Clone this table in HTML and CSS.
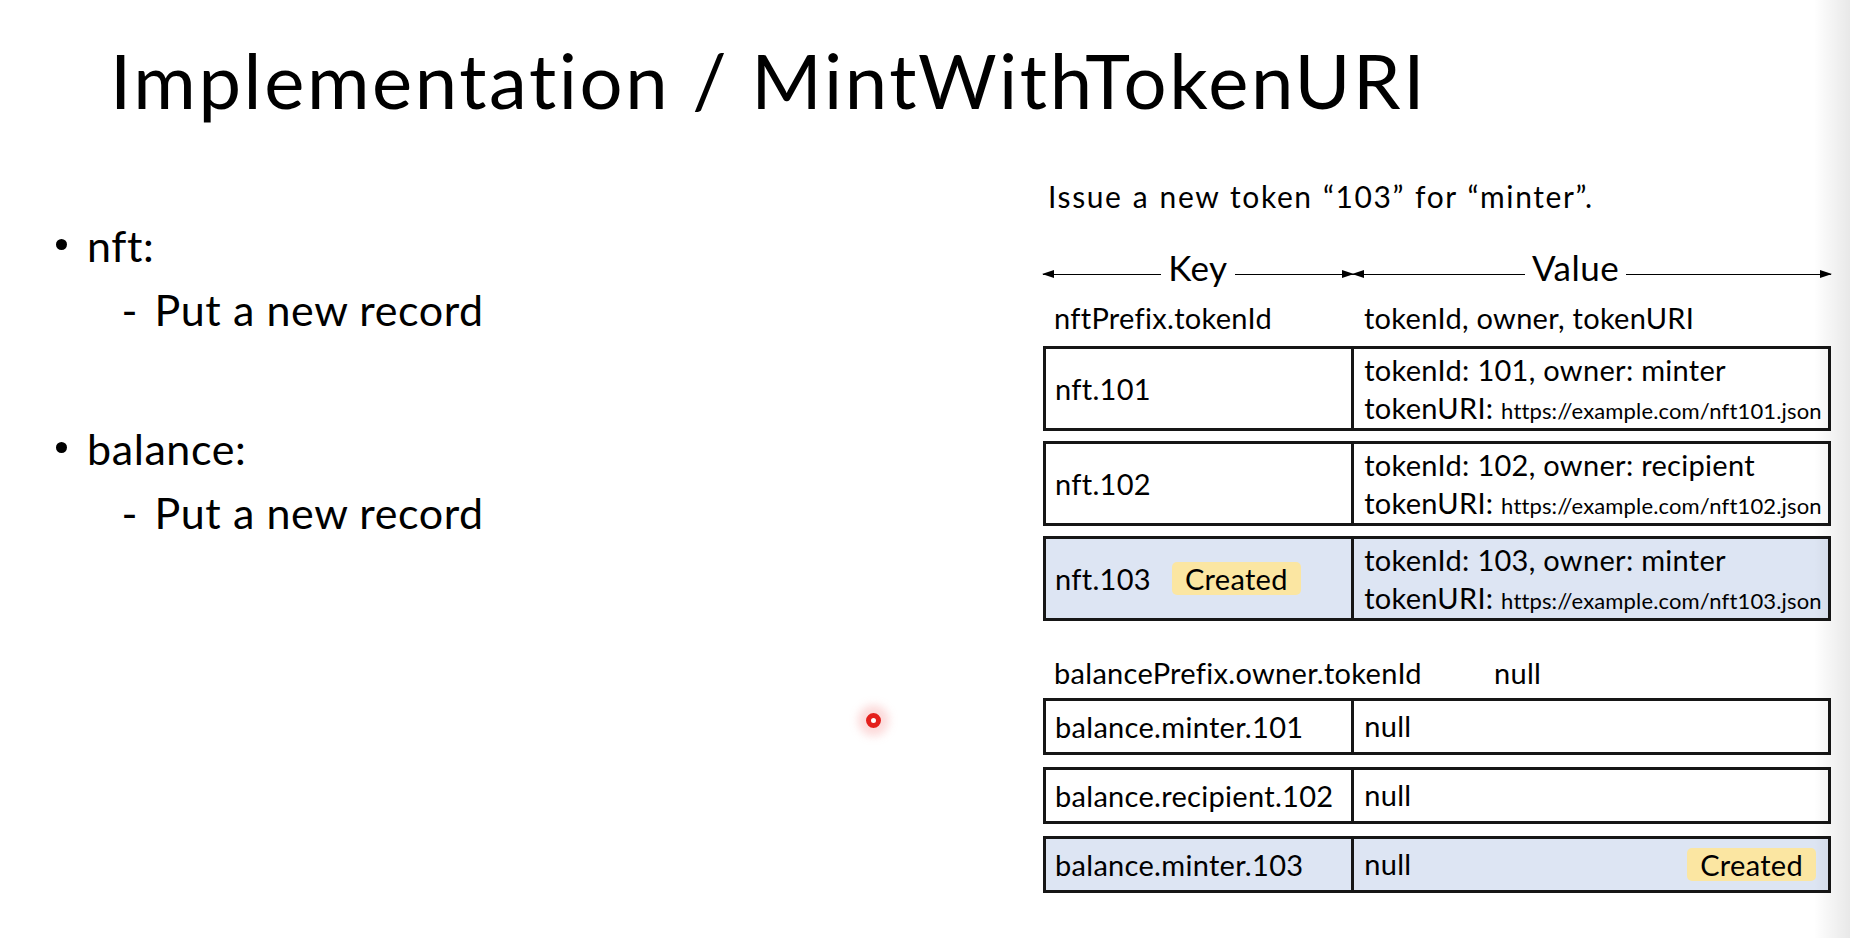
FILE: index.html
```html
<!DOCTYPE html>
<html lang="en">
<head>
<meta charset="utf-8">
<title>Implementation / MintWithTokenURI</title>
<link rel="stylesheet" href="styles.css">
</head>
<body>
<div class="slide">
  <h1 class="title">Implementation / MintWithTokenURI</h1>
  <div class="content">
    <ul class="points">
      <li class="point">
        <span class="bullet"></span>
        <div>
          <div class="point-label">nft:</div>
          <div class="sub"><span class="dash">-</span>Put a new record</div>
        </div>
      </li>
      <li class="point">
        <span class="bullet"></span>
        <div>
          <div class="point-label">balance:</div>
          <div class="sub"><span class="dash">-</span>Put a new record</div>
        </div>
      </li>
    </ul>

    <div class="diagram">
      <p class="caption">Issue a new token “103” for “minter”.</p>
      <div class="axis">
        <div class="axis-part">
          <span class="line to-left grow-eq"></span>
          <span class="axis-label">Key</span>
          <span class="line to-right grow-eq"></span>
        </div>
        <div class="axis-part">
          <span class="line to-left grow-a"></span>
          <span class="axis-label">Value</span>
          <span class="line to-right grow-b"></span>
        </div>
      </div>

      <div class="kv-head">
        <span class="kv-head-key">nftPrefix.tokenId</span>
        <span class="kv-head-value">tokenId, owner, tokenURI</span>
      </div>
      <div class="rows nft-rows">
        <div class="row nft-row">
          <div class="cell key">nft.101</div>
          <div class="cell value">
            <div>tokenId: 101, owner: minter</div>
            <div>tokenURI: <span class="url">https://example.com/nft101.json</span></div>
          </div>
        </div>
        <div class="row nft-row">
          <div class="cell key">nft.102</div>
          <div class="cell value">
            <div>tokenId: 102, owner: recipient</div>
            <div>tokenURI: <span class="url">https://example.com/nft102.json</span></div>
          </div>
        </div>
        <div class="row nft-row is-new">
          <div class="cell key">nft.103 <span class="badge">Created</span></div>
          <div class="cell value">
            <div>tokenId: 103, owner: minter</div>
            <div>tokenURI: <span class="url">https://example.com/nft103.json</span></div>
          </div>
        </div>
      </div>

      <div class="bal-head">
        <span class="bal-head-key">balancePrefix.owner.tokenId</span>
        <span>null</span>
      </div>
      <div class="rows bal-rows">
        <div class="row bal-row">
          <div class="cell key">balance.minter.101</div>
          <div class="cell value single">null</div>
        </div>
        <div class="row bal-row">
          <div class="cell key">balance.recipient.102</div>
          <div class="cell value single">null</div>
        </div>
        <div class="row bal-row is-new">
          <div class="cell key">balance.minter.103</div>
          <div class="cell value single"><span>null</span><span class="badge">Created</span></div>
        </div>
      </div>
    </div>
  </div>
  <div class="cursor"></div>
  <div class="edge-shadow"></div>
</div>
</body>
</html>
```

FILE: styles.css
```css
html, body {
  margin: 0;
  padding: 0;
  background: #ffffff;
}

body {
  font-family: Lato, "Open Sans", "Liberation Sans", sans-serif;
  font-variant-ligatures: none;
  color: #000;
}

.slide {
  position: relative;
  width: 1850px;
  height: 938px;
  overflow: hidden;
  background: #fff;
}

.title {
  margin: 0;
  padding: 40px 0 0 110px;
  font-size: 76px;
  line-height: 80px;
  font-weight: 400;
  letter-spacing: 2.6px;
  white-space: nowrap;
}

.content {
  display: flex;
}

/* left bullet list */
.points {
  flex: 0 0 1043px;
  box-sizing: border-box;
  margin: 0;
  padding: 94px 0 0 56px;
  list-style: none;
  font-size: 43px;
  line-height: 64px;
  letter-spacing: 0.6px;
}

.point {
  display: flex;
}

.point + .point {
  margin-top: 75px;
}

.bullet {
  flex: none;
  width: 11px;
  height: 11px;
  border-radius: 50%;
  background: #000;
  margin: 24.5px 20px 0 0;
}

.sub {
  padding-left: 34.5px;
  white-space: nowrap;
}

.dash {
  display: inline-block;
  width: 33px;
}

/* right diagram */
.diagram {
  flex: 0 0 788px;
  font-size: 29px;
  letter-spacing: 0.3px;
}

.caption {
  margin: 58px 0 0 5px;
  font-size: 30px;
  line-height: 36px;
  letter-spacing: 1.6px;
  word-spacing: 1px;
  white-space: nowrap;
}

.axis {
  margin-top: 32px;
  display: grid;
  grid-template-columns: 309.7px 1fr;
  height: 42px;
  font-size: 35px;
  line-height: 42px;
  letter-spacing: 0.5px;
}

.axis-part {
  display: flex;
}

.axis-label {
  padding: 0 7px;
}

.line {
  position: relative;
  align-self: flex-start;
  height: 1.5px;
  margin-top: 27.5px;
  background: #000;
}

.grow-eq { flex: 1 1 0; }
.grow-a { flex: 170 1 0; }
.grow-b { flex: 202 1 0; }

.line.to-left::before {
  content: "";
  position: absolute;
  left: -1px;
  top: 50%;
  transform: translateY(-50%);
  border-style: solid;
  border-width: 4.5px 12px 4.5px 0;
  border-color: transparent #000 transparent transparent;
}

.line.to-right::after {
  content: "";
  position: absolute;
  right: -1px;
  top: 50%;
  transform: translateY(-50%);
  border-style: solid;
  border-width: 4.5px 0 4.5px 12px;
  border-color: transparent transparent transparent #000;
}

.kv-head {
  margin-top: 13px;
  display: grid;
  grid-template-columns: 311px 1fr;
  line-height: 34px;
}

.kv-head-key {
  padding-left: 11px;
}

.kv-head-value {
  padding-left: 10px;
}

.rows {
  display: flex;
  flex-direction: column;
}

.nft-rows {
  margin-top: 11.3px;
  gap: 10px;
}

.row {
  display: grid;
  grid-template-columns: 305.2px 1fr;
  box-sizing: border-box;
  border: 3px solid #161616;
  background: #fff;
}

.row.is-new {
  background: #dde5f3;
}

.nft-row {
  height: 85px;
}

.cell.key {
  display: flex;
  align-items: center;
  gap: 21px;
  padding-left: 9px;
  white-space: nowrap;
}

.cell.value {
  border-left: 3px solid #161616;
  padding-left: 10px;
  display: flex;
  flex-direction: column;
  justify-content: center;
  line-height: 38px;
  white-space: nowrap;
}

.url {
  font-size: 22px;
  line-height: 1;
  letter-spacing: 0.15px;
}

.badge {
  display: inline-block;
  height: 33px;
  line-height: 33px;
  padding: 0 13px;
  border-radius: 5px;
  background: #fbe6a2;
}

.bal-head {
  margin-top: 34.7px;
  display: grid;
  grid-template-columns: 451px 1fr;
  line-height: 34px;
}

.bal-head-key {
  padding-left: 11px;
  white-space: nowrap;
}

.bal-rows {
  margin-top: 7.8px;
  gap: 12px;
}

.bal-row {
  height: 57px;
}

.cell.value.single {
  flex-direction: row;
  align-items: center;
  justify-content: space-between;
  padding-right: 12px;
}

/* overlays */
.cursor {
  position: absolute;
  left: 865.8px;
  top: 713.2px;
  width: 15px;
  height: 15px;
  box-sizing: border-box;
  border: 5px solid #e4201c;
  border-radius: 50%;
  box-shadow: 0 0 8px 8px rgba(245, 150, 150, 0.35);
}

.edge-shadow {
  position: absolute;
  top: 0;
  right: 0;
  width: 36px;
  height: 100%;
  background: linear-gradient(to right, rgba(0, 0, 0, 0), rgba(0, 0, 0, 0.09));
  pointer-events: none;
}
```
